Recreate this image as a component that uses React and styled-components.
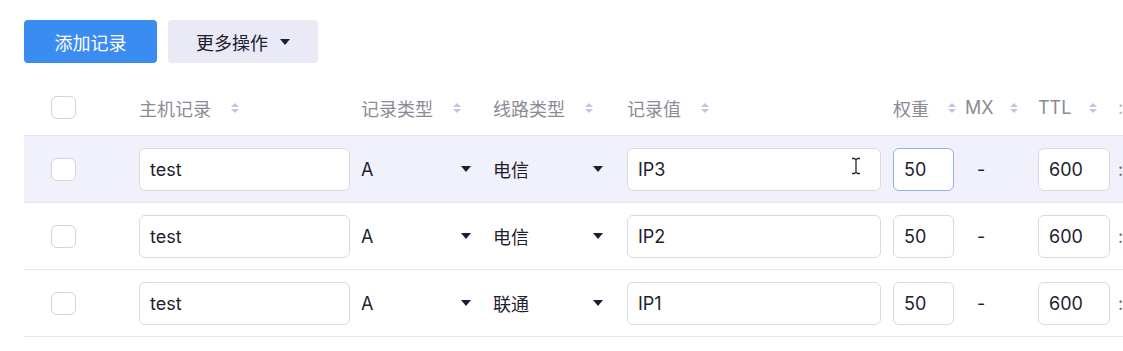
import React from "react";
import styled, { createGlobalStyle, css } from "styled-components";

const GlobalStyle = createGlobalStyle`
  body {
    margin: 0;
    background: #ffffff;
    overflow: hidden;
    font-family: Inter, "Noto Sans CJK SC", sans-serif;
  }
`;

const Page = styled.div`
  padding: 20px 0 0 24px;
  width: 1160px;
`;

const Toolbar = styled.div`
  display: flex;
  gap: 11px;
`;

const Button = styled.button`
  height: 43px;
  border: none;
  border-radius: 4px;
  font-family: inherit;
  font-size: 18px;
  display: flex;
  align-items: center;
  justify-content: center;
  gap: 12px;
  padding: 0;
  width: ${(p) => p.width}px;
  ${(p) =>
    p.primary
      ? css`
          background: #3b8cf1;
          color: #ffffff;
        `
      : css`
          background: #e9eaf6;
          color: #20202e;
        `}
`;

const Caret = styled.span`
  width: 0;
  height: 0;
  border-left: ${(p) => p.size}px solid transparent;
  border-right: ${(p) => p.size}px solid transparent;
  border-top: ${(p) => p.size + 1}px solid #1c1c38;
`;

const Table = styled.div`
  margin-top: 17px;
`;

const Row = styled.div`
  display: grid;
  grid-template-columns: 115px 222px 132px 134px 266px 72px 73px 80px 1fr;
  align-items: center;
  height: ${(p) => (p.header ? 55 : 66)}px;
  border-bottom: 1px solid ${(p) => (p.header ? "#e4e4f0" : "#e6e6ec")};
  background: ${(p) => (p.active ? "#f1f1fb" : "#ffffff")};
`;

const Cell = styled.div`
  display: flex;
  align-items: center;
  min-width: 0;
  overflow: hidden;
`;

const CheckCell = styled(Cell)`
  padding-left: 27px;
`;

const Checkbox = styled.span`
  width: 23px;
  height: 21px;
  border: 1px solid #d2d3dc;
  border-radius: 6px;
  background: #ffffff;
`;

const HeadText = styled.span`
  font-size: 18px;
  color: #8b8b95;
  white-space: nowrap;
`;

const SortIcon = styled.span`
  display: inline-flex;
  flex-direction: column;
  gap: 2px;
  margin-left: ${(p) => p.gap || 20}px;

  &::before,
  &::after {
    content: "";
    width: 0;
    height: 0;
    border-left: 4px solid transparent;
    border-right: 4px solid transparent;
  }
  &::before {
    border-bottom: 4px solid #c3c6dc;
  }
  &::after {
    border-top: 4px solid #c3c6dc;
  }
`;

const Input = styled.div`
  box-sizing: border-box;
  width: ${(p) => p.width}px;
  height: 43px;
  border: 1px solid ${(p) => (p.focused ? "#8fb2e6" : "#d9d9e0")};
  border-radius: 6px;
  background: #ffffff;
  padding-left: 10px;
  display: flex;
  align-items: center;
  font-size: 18px;
  color: #1e1e2e;
  position: relative;
`;

const Select = styled.div`
  width: 110px;
  display: flex;
  align-items: center;
  justify-content: space-between;
  font-size: 18px;
  color: #1e1e2e;
`;

const PlainText = styled.span`
  font-size: 18px;
  color: ${(p) => p.color || "#1e1e2e"};
  padding-left: ${(p) => p.indent || 0}px;
`;

const Cursor = styled.svg`
  position: absolute;
  left: 223px;
  top: 8px;
`;

const headers = [
  { label: "主机记录" },
  { label: "记录类型" },
  { label: "线路类型" },
  { label: "记录值" },
  { label: "权重", gap: 19 },
  { label: "MX", gap: 16 },
  { label: "TTL", gap: 18 },
];

const rows = [
  { host: "test", type: "A", line: "电信", value: "IP3", active: true },
  { host: "test", type: "A", line: "电信", value: "IP2" },
  { host: "test", type: "A", line: "联通", value: "IP1" },
];

export default function App() {
  return (
    <Page>
      <GlobalStyle />
      <Toolbar>
        <Button primary width={133}>
          添加记录
        </Button>
        <Button width={150}>
          更多操作
          <Caret size={5} />
        </Button>
      </Toolbar>
      <Table>
        <Row header>
          <CheckCell>
            <Checkbox />
          </CheckCell>
          {headers.map((h) => (
            <Cell key={h.label}>
              <HeadText>{h.label}</HeadText>
              <SortIcon gap={h.gap} />
            </Cell>
          ))}
          <Cell>
            <PlainText color="#b0b0ba">:</PlainText>
          </Cell>
        </Row>
        {rows.map((r) => (
          <Row key={r.value} active={r.active}>
            <CheckCell>
              <Checkbox />
            </CheckCell>
            <Cell>
              <Input width={211}>{r.host}</Input>
            </Cell>
            <Cell>
              <Select>
                {r.type}
                <Caret size={5} />
              </Select>
            </Cell>
            <Cell>
              <Select>
                {r.line}
                <Caret size={5} />
              </Select>
            </Cell>
            <Cell>
              <Input width={254}>
                {r.value}
                {r.active && (
                  <Cursor width="10" height="18" viewBox="0 0 10 18">
                    <path
                      d="M1 1.5h2.5L5 3l1.5-1.5H9M5 3v12M1 16.5h2.5L5 15l1.5 1.5H9"
                      fill="none"
                      stroke="#2a2a2a"
                      strokeWidth="1.3"
                    />
                  </Cursor>
                )}
              </Input>
            </Cell>
            <Cell>
              <Input width={61} focused={r.active}>
                50
              </Input>
            </Cell>
            <Cell>
              <PlainText indent={12}>-</PlainText>
            </Cell>
            <Cell>
              <Input width={72}>600</Input>
            </Cell>
            <Cell>
              <PlainText color="#6a6a76">:</PlainText>
            </Cell>
          </Row>
        ))}
      </Table>
    </Page>
  );
}
